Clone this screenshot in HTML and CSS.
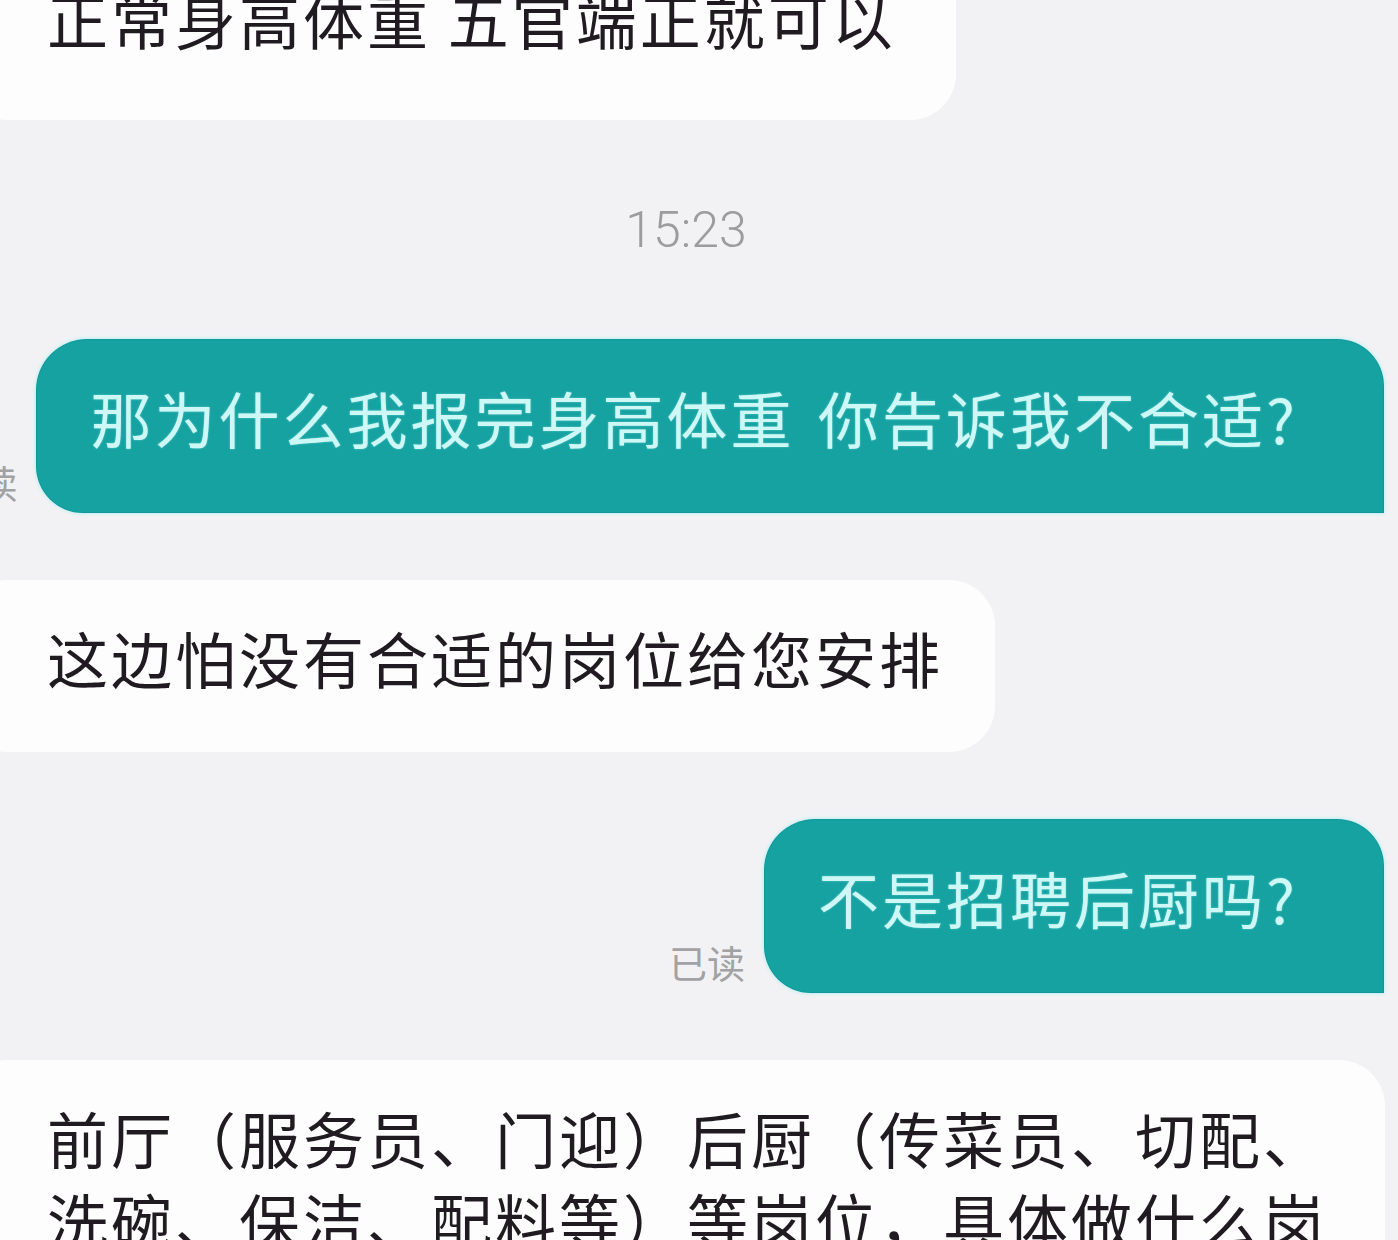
FILE: index.html
```html
<!DOCTYPE html>
<html lang="zh-CN">
<head>
  <meta charset="UTF-8" />
  <title>聊天记录</title>
  <meta name="viewport" content="width=device-width,initial-scale=1" />
  <link rel="stylesheet" href="styles.css">
</head>
<body>
  <div class="chat">
    <div class="row row-in">
      <div class="bubble bubble-in bubble-top">正常身高体重 五官端正就可以</div>
    </div>

    <div class="time">15:23</div>

    <div class="row row-out">
      <span class="read">已读</span>
      <div class="bubble bubble-out">那为什么我报完身高体重 你告诉我不合适?</div>
    </div>

    <div class="row row-in">
      <div class="bubble bubble-in">这边怕没有合适的岗位给您安排</div>
    </div>

    <div class="row row-out">
      <span class="read">已读</span>
      <div class="bubble bubble-out">不是招聘后厨吗?</div>
    </div>

    <div class="row row-in">
      <div class="bubble bubble-in">前厅（服务员、门迎）后厨（传菜员、切配、洗碗、保洁、配料等）等岗位，具体做什么岗位要看您面试的情况来安排</div>
    </div>
  </div>
</body>
</html>
```

FILE: styles.css
```css
:root {
  --page-bg: #f2f2f4;
  --bubble-in: #fdfdfd;
  --bubble-out: #17a2a2;
  --text-dark: #1f1b20;
  --text-out: #cdf8f5;
  --muted: #a2a2a4;
  --radius: 46px;
}
html, body {
  margin: 0;
  height: 100%;
  overflow: hidden;
}
body {
  background: var(--page-bg);
  font-family: "Noto Sans CJK SC", "Noto Sans", sans-serif;
  color: var(--text-dark);
}
.chat {
  display: flex;
  flex-direction: column;
  gap: 68px;
  margin-top: -62px;
}
.row {
  display: flex;
  align-items: flex-end;
}
.row-in {
  justify-content: flex-start;
  margin-left: -40px;
}
.row-out {
  justify-content: flex-end;
  gap: 20px;
  padding-right: 15px;
}
.bubble {
  box-sizing: border-box;
  flex-shrink: 0;
  font-size: 61px;
  line-height: 82px;
  letter-spacing: 3px;
  padding: 37px 58px 53px 87px;
}
.bubble-in {
  background: var(--bubble-in);
  color: var(--text-dark);
  max-width: 1425px;
  padding-right: 52px;
  border-radius: var(--radius);
}
.bubble-top {
  padding-top: 40px;
  padding-bottom: 60px;
  padding-right: 60px;
}
.bubble-out {
  background: var(--bubble-out);
  color: var(--text-out);
  padding: 37px 85px 53px 53px;
  word-spacing: 7px;
  border-radius: 50px 46px 0 46px;
  box-shadow: 0 0 0 1px #10979a, 0 0 4px 1px #a6eeee;
  text-shadow: 0 0 2px rgba(190, 255, 255, 0.5);
}
.read {
  flex-shrink: 0;
  white-space: nowrap;
  font-size: 38px;
  line-height: 40px;
  color: var(--muted);
  margin-bottom: 10px;
}
.time {
  height: 84px;
  line-height: 84px;
  padding-right: 26px;
  text-align: center;
  font-family: Roboto, "Liberation Sans", sans-serif;
  font-weight: 300;
  font-size: 50px;
  color: #9c9c9e;
}
```
